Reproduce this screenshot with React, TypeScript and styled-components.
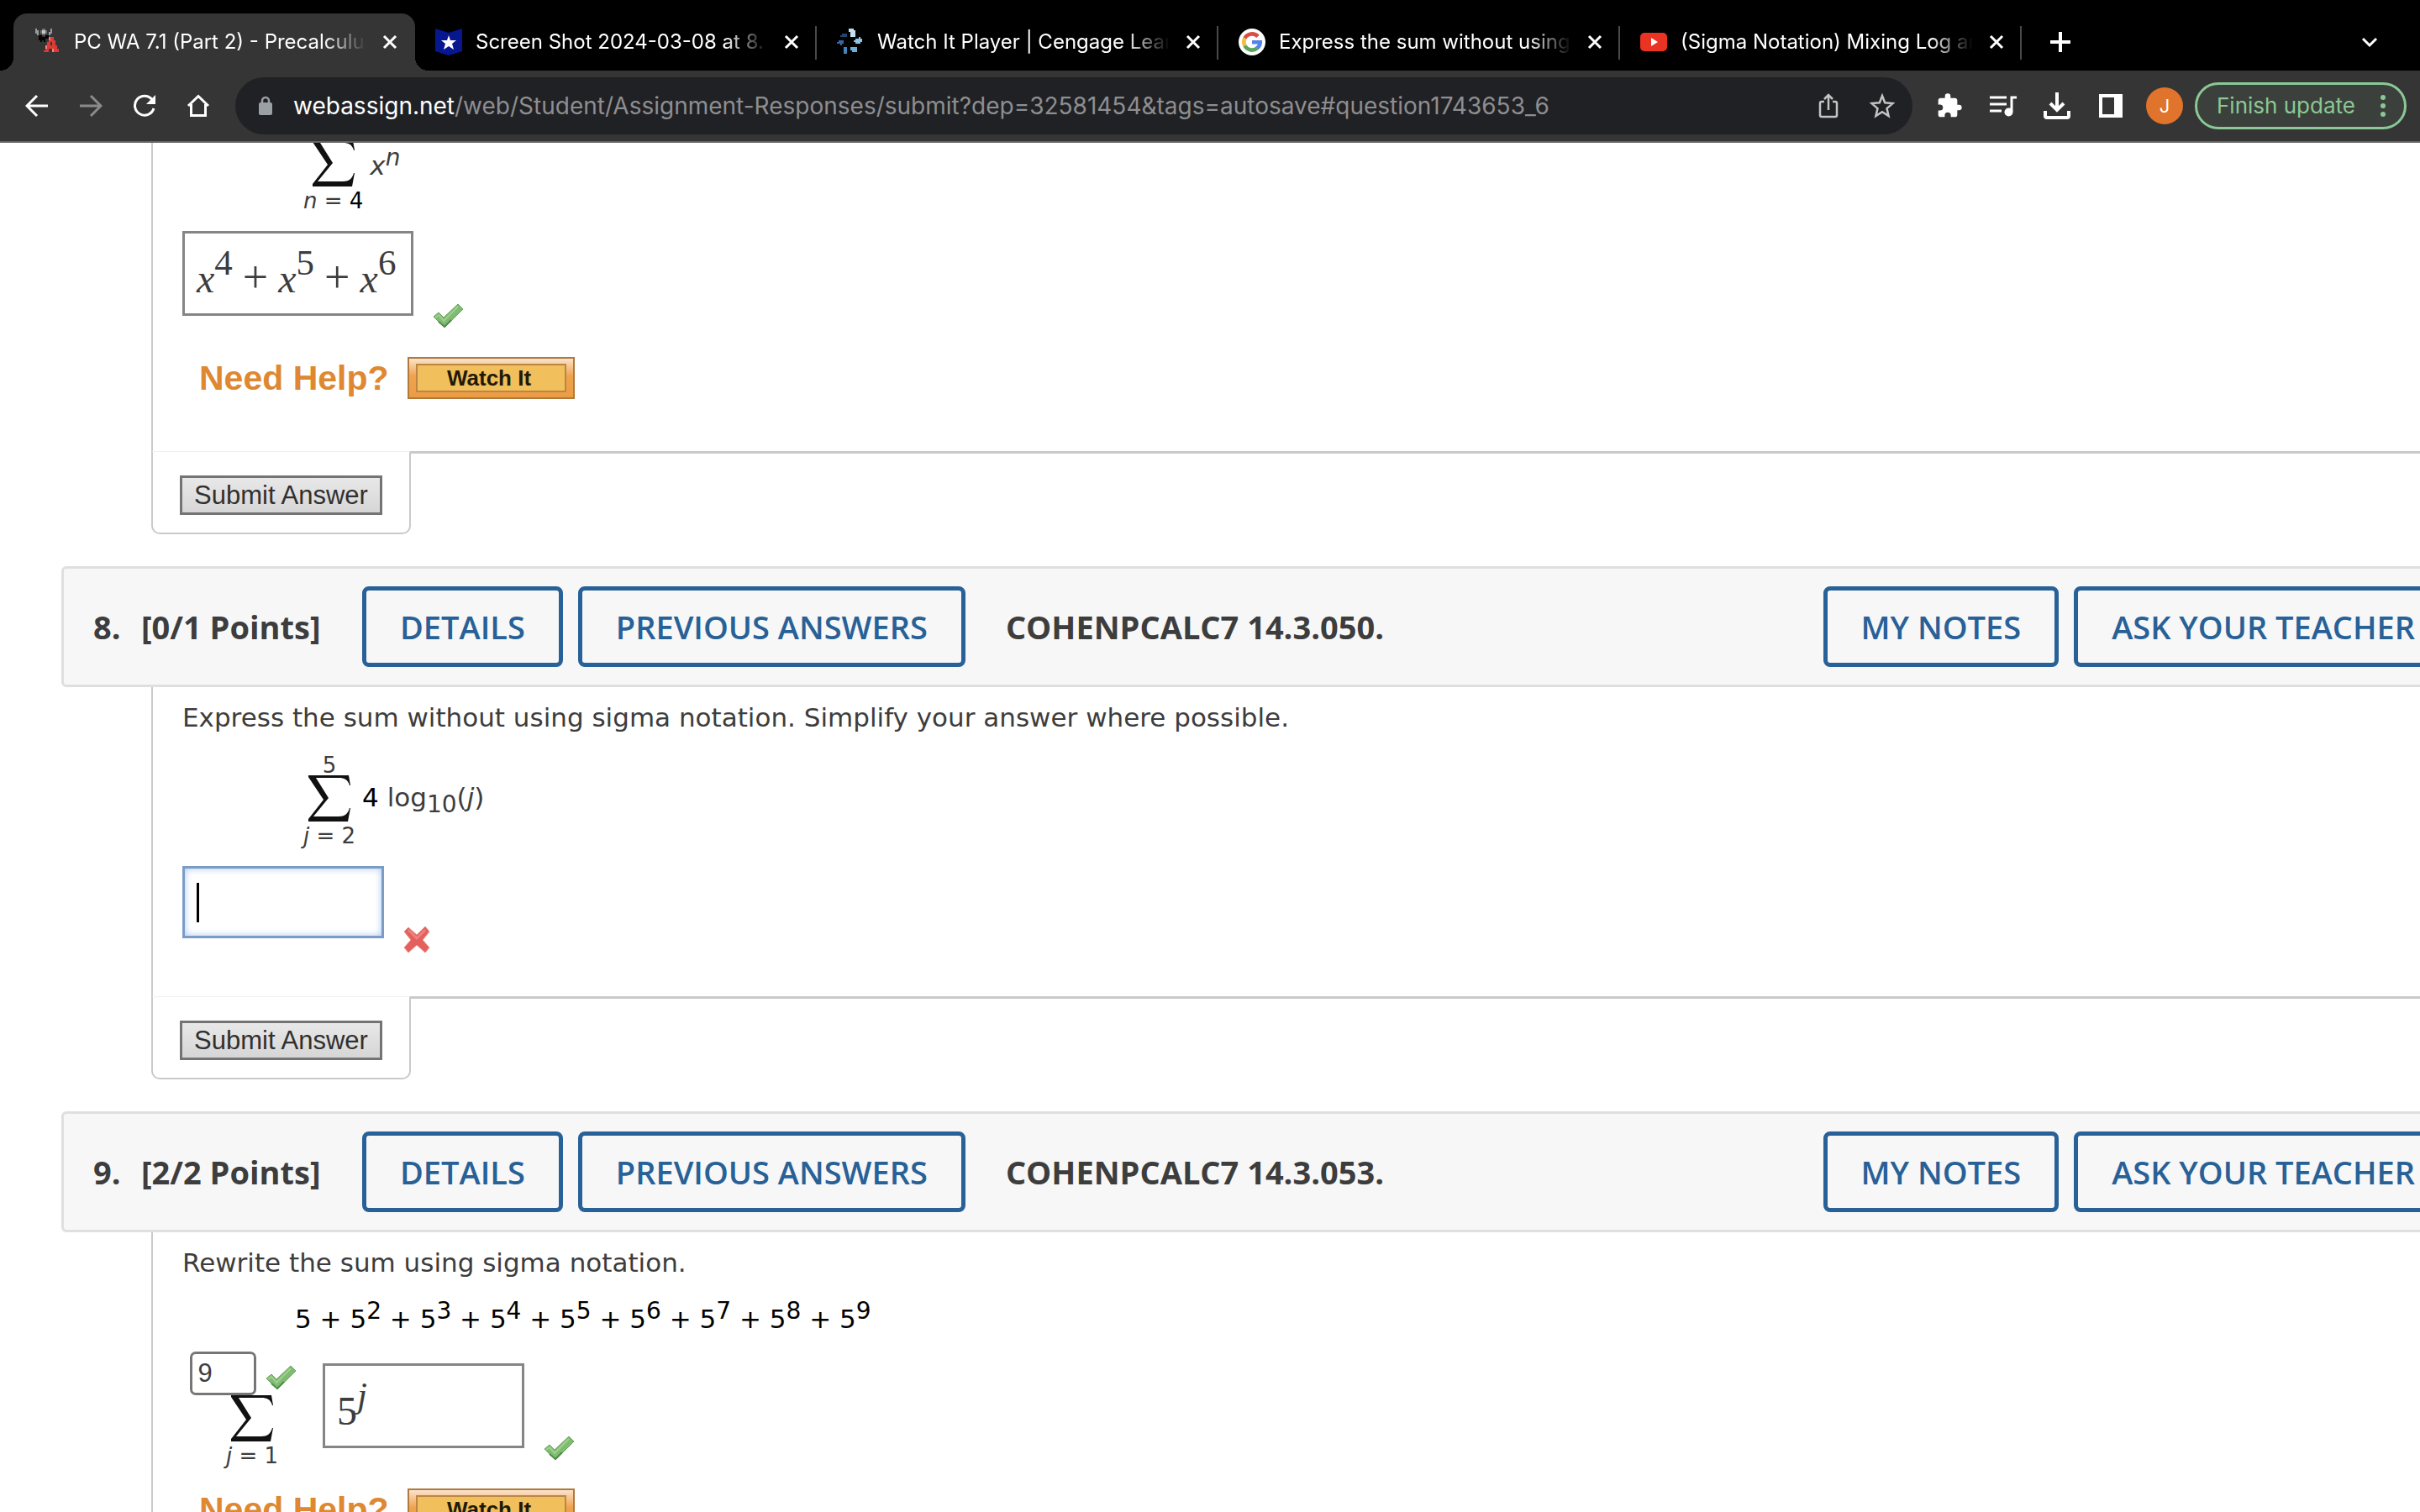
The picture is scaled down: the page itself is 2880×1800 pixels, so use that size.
import React from 'react';
import styled, { createGlobalStyle, css } from 'styled-components';

const ui = 'Inter, Roboto, sans-serif';
const arial = '"Liberation Sans", Arial, sans-serif';
const verdana = '"DejaVu Sans", Verdana, sans-serif';
const openSans = '"Open Sans", "Noto Sans", sans-serif';
const serif = '"Liberation Serif", "Times New Roman", serif';

const GlobalStyle = createGlobalStyle`
  * { box-sizing: border-box; }
  html, body, #root { height: 100%; }
  body { margin: 0; background: #fff; color: #3d3d3d; overflow: hidden; }
  button, input { font: inherit; color: inherit; margin: 0; padding: 0; background: none; border: 0; }
  svg { display: block; flex: none; }
`;

const Window = styled.div`
  display: flex;
  flex-direction: column;
  height: 100%;
`;

/* ---------- browser chrome ---------- */

const TabStrip = styled.div`
  flex: none;
  display: flex;
  align-items: stretch;
  height: 84px;
  padding: 16px 32px 0 16px;
  background: #000;
  color: #fff;
  font: 400 24px/32px ${ui};
`;

const Tab = styled.div<{ $active?: boolean; $divided?: boolean }>`
  position: relative;
  flex: 0 1 478px;
  min-width: 0;
  display: flex;
  align-items: center;
  gap: 16px;
  padding: 0 18px 0 24px;
  ${(p) =>
    p.$active &&
    css`
      background: #353535;
      border-radius: 16px 16px 0 0;
      &::before,
      &::after {
        content: '';
        position: absolute;
        bottom: 0;
        width: 16px;
        height: 16px;
      }
      &::before {
        right: 100%;
        background: radial-gradient(circle at 0 0, transparent 16px, #353535 16px);
      }
      &::after {
        left: 100%;
        background: radial-gradient(circle at 100% 0, transparent 16px, #353535 16px);
      }
    `}
  ${(p) =>
    p.$divided &&
    css`
      &::after {
        content: '';
        position: absolute;
        right: 0;
        top: 15px;
        width: 2px;
        height: 40px;
        background: #4a4a4a;
      }
    `}
`;

const TabTitle = styled.span`
  flex: 1;
  min-width: 0;
  overflow: hidden;
  white-space: nowrap;
  mask-image: linear-gradient(to right, #000 calc(100% - 52px), transparent);
`;

const IconButton = styled.button<{ $size?: number }>`
  flex: none;
  display: grid;
  place-items: center;
  width: ${(p) => p.$size ?? 64}px;
  height: ${(p) => p.$size ?? 64}px;
`;

const NewTab = styled(IconButton)`
  height: 68px;
  margin-left: 14px;
`;

const TabSearch = styled(IconButton)`
  height: 68px;
  margin-left: auto;
`;

const Toolbar = styled.div`
  flex: none;
  display: flex;
  align-items: center;
  height: 86px;
  padding: 0 16px 0 12px;
  background: #353535;
  border-bottom: 2px solid #656565;
  color: #fff;
  font: 400 28px/36px ${ui};
`;

const AddressBar = styled.div`
  flex: 1;
  min-width: 0;
  display: flex;
  align-items: center;
  height: 68px;
  margin: 0 12px;
  padding: 0 4px 0 27px;
  border-radius: 34px;
  background: #202125;
`;

const Address = styled.a`
  flex: 1;
  min-width: 0;
  margin-left: 24px;
  overflow: hidden;
  white-space: nowrap;
  color: #8e8e90;
  text-decoration: none;
`;

const Host = styled.span`
  color: #fff;
`;

const Avatar = styled.button`
  flex: none;
  width: 44px;
  height: 44px;
  margin: 0 14px 0 10px;
  border-radius: 50%;
  background: #e0742c;
  font-size: 22px;
  line-height: 44px;
`;

const UpdateButton = styled.button`
  flex: none;
  display: flex;
  align-items: center;
  justify-content: space-between;
  width: 252px;
  height: 56px;
  padding: 0 22px 0 23px;
  border: 3px solid #8bc895;
  border-radius: 28px;
  background: #3b403c;
  color: #8bc895;
  font-size: 26px;
  white-space: nowrap;
`;

/* ---------- assignment page ---------- */

const Viewport = styled.main`
  flex: 1;
  min-height: 0;
  overflow: hidden;
`;

const Sheet = styled.div`
  width: calc(100% + 64px);
  padding-left: 73px;
`;

const QuestionBar = styled.header`
  display: flex;
  align-items: center;
  height: 144px;
  padding: 0 22px 0 35px;
  border: 3px solid #dfdfdf;
  border-radius: 6px;
  background: #f7f7f7;
  font: 700 38px/52px ${openSans};
  white-space: nowrap;
`;

const QuestionNumber = styled.span`
  width: 57px;
`;

const Points = styled.span`
  width: 263px;
`;

const OutlineButton = styled.button`
  height: 96px;
  margin-right: 18px;
  padding: 0 40px;
  border: 5px solid #286197;
  border-radius: 8px;
  color: #286197;
  font-weight: 600;
`;

const Code = styled.span`
  margin-left: 30px;
`;

const BarEnd = styled.div`
  display: flex;
  margin-left: auto;
  margin-right: -18px;
`;

const Body = styled.section<{ $scrolled?: boolean; $end?: number }>`
  margin-left: 107px;
  margin-top: ${(p) => (p.$scrolled ? '-3px' : '0')};
  padding: ${(p) => (p.$scrolled ? 0 : 16)}px 0 ${(p) => p.$end ?? 0}px 35px;
  border-left: 2px solid #cacaca;
  font: 400 31px/40px ${verdana};
`;

const Prompt = styled.p`
  margin: 0 0 20px;
`;

const Expression = styled.div`
  display: flex;
  align-items: flex-start;
  gap: 8px;
  padding-left: 144px;
  margin-bottom: 24px;
`;

const Sum = styled.div`
  display: flex;
  flex-direction: column;
  align-items: center;
`;

const Limit = styled.div`
  padding-top: 5px;
  font-size: 26px;
  line-height: 24px;
  white-space: nowrap;
`;

const Term = styled.div<{ $below: number }>`
  margin-top: ${(p) => p.$below}px;
  white-space: nowrap;
`;

const Ink = styled.span`
  color: #000;
`;

const Sup = styled.sup`
  font-size: 28px;
  line-height: 0;
  vertical-align: 11px;
`;

const Sub = styled.sub`
  font-size: 28px;
  line-height: 0;
  vertical-align: -7px;
`;

const Series = styled.p`
  margin: 0 0 12px 134px;
  color: #000;
  line-height: 54px;
`;

const AnswerRow = styled.div`
  display: flex;
  align-items: flex-end;
  gap: 23px;
`;

const MathBox = styled.div<{ $wide?: boolean }>`
  width: ${(p) => (p.$wide ? 275 : 240)}px;
  height: 101px;
  margin-bottom: 15px;
  padding: 26px 14px 0;
  border: 3px solid #858585;
  font: 400 48px/56px ${serif};
  white-space: nowrap;
`;

const Power = styled.sup`
  font-size: 43px;
  line-height: 0;
  vertical-align: 21px;
`;

const Plus = styled.span`
  margin: 0 12px;
  font-size: 54px;
  line-height: 0;
`;

const FocusedBox = styled.label`
  display: flex;
  align-items: center;
  width: 240px;
  height: 86px;
  margin-bottom: 18px;
  padding: 0 14px;
  border: 3px solid #7a9cc6;
  box-shadow: inset 0 0 8px #a9c6ee;
`;

const Caret = styled.span`
  flex: none;
  width: 3px;
  height: 47px;
  background: #000;
`;

const BareInput = styled.input`
  flex: 1;
  min-width: 0;
  height: 60px;
  outline: 0;
`;

const Builder = styled.div`
  display: flex;
  align-items: flex-start;
`;

const BuilderSum = styled(Sum)`
  width: 166px;
`;

const LimitRow = styled.div`
  display: flex;
  align-items: center;
  gap: 11px;
  padding-right: 22px;

  svg {
    margin-top: 10px;
  }
`;

const LimitInput = styled.input`
  width: 79px;
  height: 52px;
  padding: 0 7px;
  border: 3px solid #767676;
  border-radius: 7px;
  background: #fff;
  font: 400 31px/40px ${arial};
`;

const BuilderAnswer = styled(AnswerRow)`
  margin: 14px 0 0 1px;
`;

const Help = styled.div<{ $top: number }>`
  display: flex;
  align-items: center;
  gap: 22px;
  margin-top: ${(p) => p.$top}px;
  padding-left: 20px;
  font: 700 41px/50px ${arial};
  color: #de8831;
`;

const WatchButton = styled.button`
  width: 199px;
  height: 50px;
  padding: 6px 8px;
  border: 2px solid #b07a3c;
  background: linear-gradient(#fbe3cb, #f0a24c 45%, #ec9c45);
  color: #1f1a08;
`;

const WatchFace = styled.span`
  display: block;
  padding-right: 4px;
  border: 2px solid #b98646;
  background: #f1bf5b;
  font-size: 26px;
  line-height: 30px;
`;

const SubmitRow = styled.div`
  display: flex;
  align-items: flex-start;
  margin: 0 0 38px 107px;
`;

const SubmitTab = styled.div`
  width: 309px;
  padding: 28px 0 21px 32px;
  border: 2px solid #cacaca;
  border-top: 1px solid #f0f0f0;
  border-radius: 0 0 10px 10px;
`;

const SubmitRule = styled.div`
  flex: 1;
  border-top: 3px solid #cacaca;
`;

const SubmitButton = styled.button`
  display: block;
  width: 241px;
  height: 47px;
  border: 3px solid #747474;
  background: linear-gradient(#e8e8e8, #d6d6d6);
  color: #303030;
  font: 400 31px/40px ${arial};
`;

/* ---------- drawings ---------- */

const stroke = { fill: 'none', stroke: 'currentColor', strokeWidth: 3 } as const;

const Cross = () => (
  <svg width="18" height="18" viewBox="0 0 18 18" {...stroke}>
    <path d="M2 2l14 14M16 2L2 16" />
  </svg>
);

const SpiderIcon = () => (
  <svg width="32" height="32" viewBox="0 0 32 32">
    <path d="M2 0h2v2h2v6H4V6H2zM20 0h2v6h-2v2h-2V4h2z" fill="#9a9a9a" />
    <path d="M8 2h2V0h4v2h2v4h-2v2h-4V6H8z" fill="#6f6f6f" />
    <path d="M10 2h4v4h-4z" fill="#c4c4c4" />
    <path d="M6 8h4v2h4V8h4v2h2v4h-2v-2h-4v4h-2v-2h-2v2H8v-2H6z" fill="#050505" />
    <path d="M18 10h6v4h2v6h2v4h2v4h-8v-4h-4v4h-6v-2h2v-4h2v-6h2zM20 16v4h2v-4z" fill="#dc3a35" fillRule="evenodd" />
    <path d="M18 10h2v4h-2zM14 20h2v4h-2zM22 24h2v4h-2z" fill="#ef8580" />
  </svg>
);

const FlagIcon = () => (
  <svg width="32" height="32" viewBox="0 0 32 32">
    <path d="M0 0l16 5L32 0v27l-16 5L0 27z" fill="#07178f" />
    <path d="M16 8l2 6h7l-5 4 2 7-6-4-6 4 2-7-5-4h7z" fill="#fff" />
  </svg>
);

const CengageIcon = () => (
  <svg width="32" height="32" viewBox="0 0 32 32">
    <path d="M14 0h6v2h2v8h-6V4h-2z" fill="#c4e0f0" />
    <path d="M22 12h4v-2h2v2h2v4h-2v2h-6v-2h-2v-2h2z" fill="#8cc4e4" />
    <path d="M16 22h8v6h-6v-2h-2z" fill="#6db0d6" />
    <path d="M8 22h4v8H8z" fill="#3f86bf" />
    <path d="M2 14h6v4H6v2H4v-2H0v-2h2z" fill="#3567a8" />
    <path d="M6 6h6v4H4V8h2z" fill="#24436f" />
  </svg>
);

const GoogleIcon = () => (
  <svg width="32" height="32" viewBox="0 0 32 32">
    <circle cx="16" cy="16" r="16" fill="#fff" />
    <g fill="none" strokeWidth="4.6">
      <path d="M7.400 11.500A9.700 9.700 0 0 1 23 9.400" stroke="#d94f40" />
      <path d="M7.400 20.500a9.700 9.700 0 0 1 0-9" stroke="#f2bd42" />
      <path d="M22.500 23A9.700 9.700 0 0 1 7.400 20.500" stroke="#58a55c" />
      <path d="M16 16.300h9.700A9.700 9.700 0 0 1 22.300 23.300" stroke="#5383ec" />
    </g>
  </svg>
);

const YoutubeIcon = () => (
  <svg width="32" height="32" viewBox="0 0 32 32">
    <rect y="5" width="32" height="22" rx="5" fill="#ea3323" />
    <path d="M13 11l8 5-8 5z" fill="#fff" />
  </svg>
);

const PlusIcon = () => (
  <svg width="24" height="24" viewBox="0 0 24 24" {...stroke} strokeWidth={4}>
    <path d="M12 0v24M0 12h24" />
  </svg>
);

const ChevronIcon = () => (
  <svg width="20" height="14" viewBox="0 0 20 14" {...stroke}>
    <path d="M2 3l8 8 8-8" />
  </svg>
);

const BackIcon = ({ flip }: { flip?: boolean }) => (
  <svg width="28" height="28" viewBox="0 0 28 28" {...stroke} color={flip ? '#8b8b8b' : '#fff'}>
    <path d={flip ? 'M1 14h24M14 2l12 12-12 12' : 'M27 14H3M14 2L2 14l12 12'} />
  </svg>
);

const ReloadIcon = () => (
  <svg width="28" height="28" viewBox="0 0 28 28" {...stroke}>
    <path d="M23 6.500A11.500 11.500 0 1 0 25 17" />
    <path d="M27 1v11H16z" fill="currentColor" stroke="none" />
  </svg>
);

const HomeIcon = () => (
  <svg width="28" height="28" viewBox="0 0 28 28" {...stroke}>
    <path d="M2 14L14 2.500 26 14M5.500 12v13.500h17V12" />
  </svg>
);

const LockIcon = () => (
  <svg width="18" height="24" viewBox="0 0 18 24">
    <path d="M5 10V6a4 4 0 0 1 8 0v4" fill="none" stroke="#9aa0a4" strokeWidth="2.500" />
    <rect x="1" y="8" width="16" height="15" rx="2" fill="#9aa0a4" />
  </svg>
);

const ShareIcon = () => (
  <svg width="26" height="30" viewBox="0 0 26 30" fill="none" stroke="#c4c4c4" strokeWidth="2.500">
    <path d="M8 10H5a2 2 0 0 0-2 2v14a2 2 0 0 0 2 2h16a2 2 0 0 0 2-2V12a2 2 0 0 0-2-2h-3M13 20V3M8 7l5-5 5 5" />
  </svg>
);

const StarIcon = () => (
  <svg width="30" height="30" viewBox="0 0 30 30" fill="none" stroke="#c4c4c4" strokeWidth="2.500">
    <path d="M15 3l3.200 8.300 9.300.8-7 6 2.100 9L15 22.300l-7.600 4.800 2.100-9-7-6 9.300-.8z" />
  </svg>
);

const PuzzleIcon = () => (
  <svg width="32" height="32" viewBox="0 0 24 24" fill="currentColor">
    <path d="M20.500 11H19V7c0-1.100-.9-2-2-2h-4V3.500a2.500 2.500 0 0 0-5 0V5H4c-1.100 0-2 .9-2 2v3.800h1.500a2.700 2.700 0 0 1 0 5.400H2V20c0 1.100.9 2 2 2h3.800v-1.500a2.700 2.700 0 0 1 5.400 0V22H17c1.100 0 2-.9 2-2v-4h1.500a2.500 2.500 0 0 0 0-5z" />
  </svg>
);

const MusicIcon = () => (
  <svg width="32" height="26" viewBox="0 0 32 26" {...stroke}>
    <path d="M0 3h20M0 11h20M0 19h14M26 20V3h6" />
    <circle cx="22.500" cy="20.500" r="5" fill="currentColor" stroke="none" />
  </svg>
);

const DownloadIcon = () => (
  <svg width="32" height="32" viewBox="0 0 32 32" {...stroke} strokeWidth={4}>
    <path d="M16 0v20M8 13l8 8 8-8M2 22v6a2 2 0 0 0 2 2h24a2 2 0 0 0 2-2v-6" />
  </svg>
);

const PanelIcon = () => (
  <svg width="28" height="28" viewBox="0 0 28 28">
    <path d="M0 0h28v28H0zM4 4v20h14V4z" fill="currentColor" fillRule="evenodd" />
  </svg>
);

const DotsIcon = () => (
  <svg width="6" height="26" viewBox="0 0 6 26" fill="currentColor">
    <circle cx="3" cy="3" r="3" />
    <circle cx="3" cy="13" r="3" />
    <circle cx="3" cy="23" r="3" />
  </svg>
);

const Sigma = () => (
  <svg width="52" height="55" viewBox="0 0 52 55">
    <path d="M1 0h48l2 12h-1c-2-7-6-9-13-9H10l15 24L7 49h30c7 0 11-3 13-10h1l-3 16H1v-3l18-23L1 2z" fill="#111" />
  </svg>
);

const CheckIcon = () => (
  <svg width="37" height="30" viewBox="0 0 37 30">
    <path d="M1 16l6-5 6 6L30 1l6 6-22 22z" fill="#7fbb70" stroke="#68a45c" strokeWidth="1" strokeLinejoin="round" />
    <path d="M3 17l4-3 6 7L30 4" fill="none" stroke="#a0cf92" strokeWidth="2" />
    <path d="M7 22l7 6 8-8" fill="none" stroke="#4f8c47" strokeWidth="2" />
  </svg>
);

const WrongIcon = () => (
  <svg width="32" height="33" viewBox="0 0 32 33">
    <path d="M6 2l10 9L26 1l5 6-8 10 8 9-5 6-10-9-10 9-5-6 8-9-8-10z" fill="#e4605c" stroke="#ee8f8b" strokeWidth="1" strokeLinejoin="round" />
    <path d="M6 5l10 10L26 5" fill="none" stroke="#ec827d" strokeWidth="3" />
  </svg>
);

/* ---------- parts ---------- */

const tabs = [
  { title: 'PC WA 7.1 (Part 2) - Precalculus', icon: <SpiderIcon />, active: true },
  { title: 'Screen Shot 2024-03-08 at 8.', icon: <FlagIcon />, divided: true },
  { title: 'Watch It Player | Cengage Learn', icon: <CengageIcon />, divided: true },
  { title: 'Express the sum without using', icon: <GoogleIcon />, divided: true },
  { title: '(Sigma Notation) Mixing Log an', icon: <YoutubeIcon />, divided: true },
];

const Bar = ({ number, points, code }: { number: number; points: string; code: string }) => (
  <QuestionBar>
    <QuestionNumber>{number}.</QuestionNumber>
    <Points>[{points} Points]</Points>
    <OutlineButton>DETAILS</OutlineButton>
    <OutlineButton>PREVIOUS ANSWERS</OutlineButton>
    <Code>{code}</Code>
    <BarEnd>
      <OutlineButton>MY NOTES</OutlineButton>
      <OutlineButton>ASK YOUR TEACHER</OutlineButton>
    </BarEnd>
  </QuestionBar>
);

const NeedHelp = ({ top }: { top: number }) => (
  <Help $top={top}>
    Need Help?
    <WatchButton>
      <WatchFace>Watch It</WatchFace>
    </WatchButton>
  </Help>
);

const Submit = () => (
  <SubmitRow>
    <SubmitTab>
      <SubmitButton>Submit Answer</SubmitButton>
    </SubmitTab>
    <SubmitRule />
  </SubmitRow>
);

export default function App() {
  return (
    <Window>
      <GlobalStyle />
      <TabStrip>
        {tabs.map((t) => (
          <Tab key={t.title} $active={t.active} $divided={t.divided}>
            {t.icon}
            <TabTitle>{t.title}</TabTitle>
            <IconButton $size={24} aria-label="Close tab">
              <Cross />
            </IconButton>
          </Tab>
        ))}
        <NewTab aria-label="New tab">
          <PlusIcon />
        </NewTab>
        <TabSearch $size={56} aria-label="Search tabs">
          <ChevronIcon />
        </TabSearch>
      </TabStrip>
      <Toolbar>
        <IconButton aria-label="Back"><BackIcon /></IconButton>
        <IconButton aria-label="Forward"><BackIcon flip /></IconButton>
        <IconButton aria-label="Reload"><ReloadIcon /></IconButton>
        <IconButton aria-label="Home"><HomeIcon /></IconButton>
        <AddressBar>
          <LockIcon />
          <Address href="#question1743653_6">
            <Host>webassign.net</Host>
            /web/Student/Assignment-Responses/submit?dep=32581454&amp;tags=autosave#question1743653_6
          </Address>
          <IconButton aria-label="Share"><ShareIcon /></IconButton>
          <IconButton aria-label="Bookmark"><StarIcon /></IconButton>
        </AddressBar>
        <IconButton aria-label="Extensions"><PuzzleIcon /></IconButton>
        <IconButton aria-label="Media"><MusicIcon /></IconButton>
        <IconButton aria-label="Downloads"><DownloadIcon /></IconButton>
        <IconButton aria-label="Side panel"><PanelIcon /></IconButton>
        <Avatar>J</Avatar>
        <UpdateButton>
          Finish update
          <DotsIcon />
        </UpdateButton>
      </Toolbar>
      <Viewport>
        <Sheet>
          <Body $scrolled $end={62}>
            <Expression>
              <Sum>
                <Sigma />
                <Limit><i>n</i> = <Ink>4</Ink></Limit>
              </Sum>
              <Term $below={10}><i>x</i><Sup><i>n</i></Sup></Term>
            </Expression>
            <AnswerRow>
              <MathBox $wide role="textbox" aria-label="Expanded sum">
                <i>x</i><Power>4</Power><Plus>+</Plus>
                <i>x</i><Power>5</Power><Plus>+</Plus>
                <i>x</i><Power>6</Power>
              </MathBox>
              <CheckIcon />
            </AnswerRow>
            <NeedHelp top={34} />
          </Body>
          <Submit />

          <Bar number={8} points="0/1" code="COHENPCALC7 14.3.050." />
          <Body $end={51}>
            <Prompt>Express the sum without using sigma notation. Simplify your answer where possible.</Prompt>
            <Expression>
              <Sum>
                <Limit>5</Limit>
                <Sigma />
                <Limit><i>j</i> = 2</Limit>
              </Sum>
              <Term $below={35}><Ink>4</Ink> log<Sub>10</Sub>(<i>j</i>)</Term>
            </Expression>
            <AnswerRow>
              <FocusedBox>
                <Caret />
                <BareInput aria-label="Answer without sigma notation" />
              </FocusedBox>
              <WrongIcon />
            </AnswerRow>
          </Body>
          <Submit />

          <Bar number={9} points="2/2" code="COHENPCALC7 14.3.053." />
          <Body>
            <Prompt>Rewrite the sum using sigma notation.</Prompt>
            <Series>
              5{[2, 3, 4, 5, 6, 7, 8, 9].map((n) => (
                <React.Fragment key={n}> + 5<Sup>{n}</Sup></React.Fragment>
              ))}
            </Series>
            <Builder>
              <BuilderSum>
                <LimitRow>
                  <LimitInput aria-label="Upper limit" defaultValue="9" />
                  <CheckIcon />
                </LimitRow>
                <Sigma />
                <Limit><i>j</i> = 1</Limit>
              </BuilderSum>
              <BuilderAnswer>
                <MathBox role="textbox" aria-label="Summand">
                  5<Power><i>j</i></Power>
                </MathBox>
                <CheckIcon />
              </BuilderAnswer>
            </Builder>
            <NeedHelp top={27} />
          </Body>
        </Sheet>
      </Viewport>
    </Window>
  );
}
